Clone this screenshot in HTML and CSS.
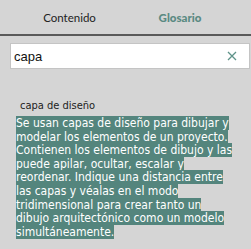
FILE: index.html
```html
<!DOCTYPE html>
<html lang="es">
<head>
  <meta charset="UTF-8" />
  <meta name="viewport" content="width=device-width, initial-scale=1" />
  <title>Glosario</title>
  <link rel="stylesheet" href="styles.css">
</head>
<body>
  <!-- pestañas -->
  <div class="tabs">
    <div class="tab">Contenido</div>
    <div class="tab active">Glosario</div>
  </div>

  <!-- búsqueda -->
  <div class="search">
    <span class="query">capa</span>
    <svg class="clear" width="10" height="10" viewBox="0 0 10 10">
      <path d="M1 1 L9 9 M9 1 L1 9" stroke="#5f9389" stroke-width="1.3" fill="none" />
    </svg>
  </div>

  <div class="entry">
    <h4>capa de diseño</h4>
    <p><span class="mark">Se usan capas de diseño para dibujar y modelar los elementos de un proyecto. Contienen los elementos de dibujo y las puede apilar, ocultar, escalar y reordenar. Indique una distancia entre las capas y véalas en el modo tridimensional para crear tanto un dibujo arquitectónico como un modelo simultáneamente.</span></p>
  </div>
</body>
</html>
```

FILE: styles.css
```css
body {
  margin: 0;
  background-color: #d5d5d5;
  font-family: "DejaVu Sans Condensed", "DejaVu Sans", Verdana, sans-serif;
  font-stretch: condensed;
}
.tabs {
  display: flex;
  border-bottom: 2px solid #5a5a5a;
  box-sizing: border-box;
  height: 36px;
}
.tab {
  display: flex;
  align-items: center;
  justify-content: center;
  font-family: Lato, sans-serif;
  font-size: 11.5px;
  color: #222;
}
.tab:first-child {
  width: 139px;
}
.tab.active {
  width: 82px;
  font-weight: 900;
  color: #5a8a82;
}
.search {
  display: flex;
  align-items: center;
  justify-content: space-between;
  margin: 7px 1px 0 10px;
  height: 26px;
  box-sizing: border-box;
  padding: 0 12px 0 3px;
  background: white;
  border: 1px solid #c4c4c4;
}
.query {
  font-family: "Liberation Sans", Arial, sans-serif;
  font-size: 13px;
  color: #111;
}
.entry {
  padding: 0 13px 0 16px;
}
h4 {
  margin: 30px 0 5px 4px;
  font-weight: normal;
  font-size: 11px;
  color: #222;
}
p {
  margin: 0;
  font-size: 12px;
  line-height: 13.6px;
}
.mark {
  background: #54857d;
  color: white;
}
```
